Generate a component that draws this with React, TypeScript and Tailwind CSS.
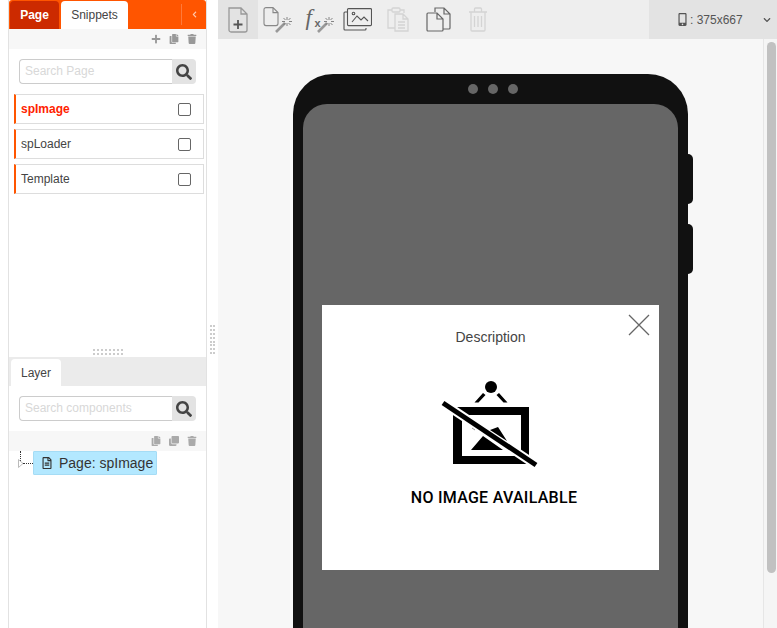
import React from 'react';
import { FaPlus, FaCopy, FaClone, FaTrash, FaSearch, FaChevronLeft, FaChevronDown, FaRegFileAlt, FaMobileAlt } from 'react-icons/fa';

const Wand = ({ x, y }: { x: number; y: number }) => (
  <g transform={`translate(${x} ${y})`} fill="none">
    <path d="M1 15 L10 6" stroke="#999" strokeWidth="2.600" />
    <path d="M12 0v3M12 6v3M7 4.500h3M14 4.500h3M8.500 1l2 2M15.500 1l-2 2M15.500 8l-2-2M8.500 8l2-2" stroke="#777" strokeWidth="0.900" />
  </g>
);

const ToolIcon = ({ children, active }: { children: React.ReactNode; active?: boolean }) => (
  <div className={`h-[39px] flex items-center justify-center ${active ? 'bg-[#e3e3e3]' : ''}`}>{children}</div>
);

const SearchBox = ({ placeholder }: { placeholder: string }) => (
  <div className="flex h-[25px] mx-[10px]">
    <div className="flex-1 border border-[#ccc] border-r-0 rounded-l-[4px] bg-white pl-[5px] text-[12px] leading-[23px] text-[#d8d8d8]">
      {placeholder}
    </div>
    <div className="w-[24px] bg-[#e3e3e3] rounded-r-[4px] flex items-center justify-center">
      <FaSearch size={16} className="text-[#444]" />
    </div>
  </div>
);

const PageRow = ({ label, active }: { label: string; active?: boolean }) => (
  <div className="h-[30px] ml-[5px] mr-[2px] flex items-center border border-[#ddd] border-l-2 border-l-[#ff5500] pl-[5px] pr-[12px]">
    <span className={`flex-1 text-[12px] ${active ? 'font-bold text-[#ff2200]' : 'text-[#444]'}`}>{label}</span>
    <span className="w-[13px] h-[13px] border border-[#666] rounded-[2px] bg-white" />
  </div>
);

export default function App() {
  return (
    <div className="w-[777px] h-[628px] overflow-hidden flex bg-white font-['Liberation_Sans',sans-serif]">
      {/* left panel */}
      <div className="ml-[8px] w-[199px] shrink-0 h-full border-x border-[#e2e2e2] flex flex-col">
        <div className="h-[29px] bg-[#ff5500] flex items-end rounded-t-[3px] text-[12px] shrink-0 pl-[1px]">
          <div className="w-[49px] h-[28px] bg-[#cc2a00] text-white rounded-t-[4px] flex items-center justify-center font-bold">Page</div>
          <div className="ml-[2px] w-[67px] h-[28px] bg-white text-[#444] rounded-t-[4px] flex items-center justify-center">Snippets</div>
          <div className="ml-auto w-[25px] h-[21px] mb-[4px] border-l border-[#ff7a3a] flex items-center justify-center">
            <FaChevronLeft size={7} className="text-[#ffc9ad]" />
          </div>
        </div>
        <div className="h-[20px] bg-[#f7f7f7] flex items-center justify-end gap-[8px] pr-[9px] text-[#999] shrink-0">
          <FaPlus size={10} />
          <FaCopy size={10} />
          <FaTrash size={10} />
        </div>
        <div className="py-[10px]">
          <SearchBox placeholder="Search Page" />
        </div>
        <div className="flex flex-col gap-[5px]">
          <PageRow label="spImage" active />
          <PageRow label="spLoader" />
          <PageRow label="Template" />
        </div>
        <div className="flex-1 flex items-end justify-center pb-[2px]">
          <div className="grid grid-cols-[repeat(8,2px)] gap-[2px]">
            {Array.from({ length: 16 }).map((_, i) => (
              <span key={i} className="w-[2px] h-[2px] bg-[#ccc]" />
            ))}
          </div>
        </div>
        <div className="h-[29px] bg-[#ebebeb] flex items-end pl-[2px] shrink-0">
          <div className="w-[50px] h-[27px] bg-white rounded-t-[4px] text-[12px] text-[#444] flex items-center justify-center">Layer</div>
        </div>
        <div className="py-[10px] shrink-0">
          <SearchBox placeholder="Search components" />
        </div>
        <div className="h-[20px] bg-[#f7f7f7] flex items-center justify-end gap-[8px] pr-[9px] text-[#aaa] shrink-0">
          <FaCopy size={10} />
          <FaClone size={10} />
          <FaTrash size={10} />
        </div>
        <div className="h-[177px] shrink-0 relative pl-[24px]">
          <div className="absolute left-[11px] top-0 h-[12px] border-l border-dotted border-[#333]" />
          <div className="absolute left-[14px] top-[12px] w-[10px] border-t border-dotted border-[#333]" />
          <svg className="absolute left-[9px] top-[8px]" width="6" height="9" viewBox="0 0 6 9" fill="#fff" stroke="#bbb">
            <path d="M.5.500l4.500 4-4.500 4z" />
          </svg>
          <div className="w-[124px] h-[24px] bg-[#b3e8ff] border border-[#a5dcf5] flex items-center pl-[7px] gap-[6px] text-[14px] text-[#333] rounded-[1px]">
            <FaRegFileAlt size={12} className="text-[#333]" />
            <span>Page: spImage</span>
          </div>
        </div>
      </div>

      {/* splitter */}
      <div className="w-[11px] shrink-0 pt-[325px] flex justify-center">
        <div className="grid grid-cols-[2px_2px] gap-[1px] h-[30px]">
          {Array.from({ length: 16 }).map((_, i) => (
            <span key={i} className="w-[2px] h-[2px] bg-[#ccc]" />
          ))}
        </div>
      </div>

      {/* right area */}
      <div className="flex-1 flex flex-col min-w-0">
        <div className="h-[39px] bg-[#eeeeee] flex shrink-0">
          <div className="flex-1 grid grid-cols-[40px_40px_42px_34px_47px_34px_45px] content-start">
            <ToolIcon active>
              <svg width="20" height="26" viewBox="0 0 20 26" fill="none" stroke="#999" strokeWidth="1.300">
                <path d="M1 1h12l6 6v16a2 2 0 0 1-2 2H3a2 2 0 0 1-2-2z M13 1v6h6" />
                <path d="M10 13v9M5.500 17.500h9" stroke="#555" strokeWidth="1.800" />
              </svg>
            </ToolIcon>
            <ToolIcon>
              <svg width="30" height="26" viewBox="0 0 30 26" fill="none" stroke="#888" strokeWidth="1.100">
                <path d="M3 .600h7l5 5v11a2 2 0 0 1-2 2H3a2 2 0 0 1-2-2V2.600a2 2 0 0 1 2-2z M10 .600v5h5" />
                <Wand x={12} y={10} />
              </svg>
            </ToolIcon>
            <ToolIcon>
              <div className="relative w-[29px] h-[28px]">
                <span className="absolute left-[1px] top-[-1px] text-[23px] leading-[26px] italic text-[#666] font-['Liberation_Serif',serif]">f</span>
                <span className="absolute left-[10px] top-[11px] text-[11px] leading-[12px] font-bold text-[#666]">x</span>
                <svg className="absolute left-0 top-0" width="29" height="28" viewBox="0 0 29 28" fill="none">
                  <Wand x={12} y={11} />
                </svg>
              </div>
            </ToolIcon>
            <ToolIcon>
              <svg width="29" height="23" viewBox="0 0 29 23" fill="none" stroke="#555" strokeWidth="1.100">
                <rect x="4.500" y=".600" width="24" height="17" rx="1" />
                <path d="M4 4H2a1 1 0 0 0-1 1v16a1 1 0 0 0 1 1h20a1 1 0 0 0 1-1v-1" />
                <path d="M9 14l5-6 4 4 3-3 4 4" />
                <circle cx="10.500" cy="5.500" r="1.300" />
              </svg>
            </ToolIcon>
            <ToolIcon>
              <svg width="22" height="25" viewBox="0 0 22 25" fill="none" stroke="#d4d4d4" strokeWidth="1.300">
                <path d="M5 3H1v18h7 M13 3h4v3" />
                <rect x="5" y="1" width="8" height="4" rx="1" />
                <path d="M8 7h8l5 5v12H8z M16 7v5h5 M11 15h7M11 18h7M11 21h7" />
              </svg>
            </ToolIcon>
            <ToolIcon>
              <svg width="25" height="25" viewBox="0 0 25 25" fill="none" stroke="#666" strokeWidth="1.200">
                <path d="M9 5V1h9l6 6v14a1 1 0 0 1-1 1h-6 M18 1v6h6" />
                <path d="M2 6h9l6 6v11a1 1 0 0 1-1 1H2a1 1 0 0 1-1-1V7a1 1 0 0 1 1-1z M11 6v6h6" />
              </svg>
            </ToolIcon>
            <ToolIcon>
              <svg width="20" height="25" viewBox="0 0 20 25" fill="none" stroke="#d4d4d4" strokeWidth="1.300">
                <path d="M1 5h18 M6.500 5V2a1 1 0 0 1 1-1h5a1 1 0 0 1 1 1v3 M3 5v18a1 1 0 0 0 1 1h12a1 1 0 0 0 1-1V5 M6.500 9v11M10 9v11M13.500 9v11" />
              </svg>
            </ToolIcon>
          </div>
          <div className="w-[128px] bg-[#e3e3e3] flex items-center text-[12px] text-[#555] pl-[27px]">
            <FaMobileAlt size={13} className="mr-[1px]" />
            <span>: 375x667</span>
            <FaChevronDown size={8} className="ml-[20px]" />
          </div>
        </div>

        <div className="flex-1 flex min-h-0 overflow-hidden">
          <div className="flex-1 bg-[#f7f7f7] flex justify-center pt-[35px] overflow-hidden">
            <div className="relative w-[395px] h-[800px] shrink-0 bg-[#111] rounded-t-[40px] pt-[30px] px-[10px]">
              <div className="absolute top-[10px] left-[4px] right-0 flex justify-center gap-[10px]">
                <span className="w-[10px] h-[10px] rounded-full bg-[#666]" />
                <span className="w-[10px] h-[10px] rounded-full bg-[#666]" />
                <span className="w-[10px] h-[10px] rounded-full bg-[#666]" />
              </div>
              <div className="absolute right-[-5px] top-[80px] w-[5px] h-[50px] bg-[#111] rounded-r-[5px]" />
              <div className="absolute right-[-5px] top-[150px] w-[5px] h-[50px] bg-[#111] rounded-r-[5px]" />
              <div className="w-[375px] h-[667px] bg-[#666] rounded-t-[24px] flex justify-center pt-[201px]">
                <div className="relative w-[337px] h-[265px] bg-white flex flex-col items-center">
                  <svg className="absolute right-[9px] top-[9px]" width="22" height="22" viewBox="0 0 22 22" stroke="#666" strokeWidth="1.300">
                    <path d="M1 1l20 20M21 1L1 21" />
                  </svg>
                  <p className="mt-[24px] text-[14px] leading-[17px] text-[#444]">Description</p>
                  <svg className="mt-[34px]" width="101" height="90" viewBox="0 0 101 90">
                    <circle cx="51" cy="7" r="6" fill="#000" />
                    <path d="M43 13l2.500 2-7 7.500h-4z M59 13l-2.500 2 7 7.500h4z" fill="#000" />
                    <path fillRule="evenodd" d="M13 27h76v57H13z M22 35v41h59V35z" fill="#000" />
                    <path d="M3 23l93 62" stroke="#fff" strokeWidth="9" />
                    <path d="M31 70L43 56L63 70z M58 47L50 50L67 61z" fill="#000" />
                    <path d="M32 48l3 2" stroke="#999" strokeWidth="1" />
                    <path d="M3 23l93 62" stroke="#000" strokeWidth="5" />
                  </svg>
                  <p className="mt-[19px] ml-[7px] text-[16px] leading-[18px] font-medium text-black tracking-[0.28px] font-['Roboto',sans-serif]">NO IMAGE AVAILABLE</p>
                </div>
              </div>
            </div>
          </div>
          <div className="w-[14px] shrink-0 bg-[#f5f5f5] border-l border-[#e6e6e6] pt-[3px] pl-[3px]">
            <div className="w-[9px] h-[531px] bg-[#c1c1c1] rounded-[5px]" />
          </div>
        </div>
      </div>
    </div>
  );
}
